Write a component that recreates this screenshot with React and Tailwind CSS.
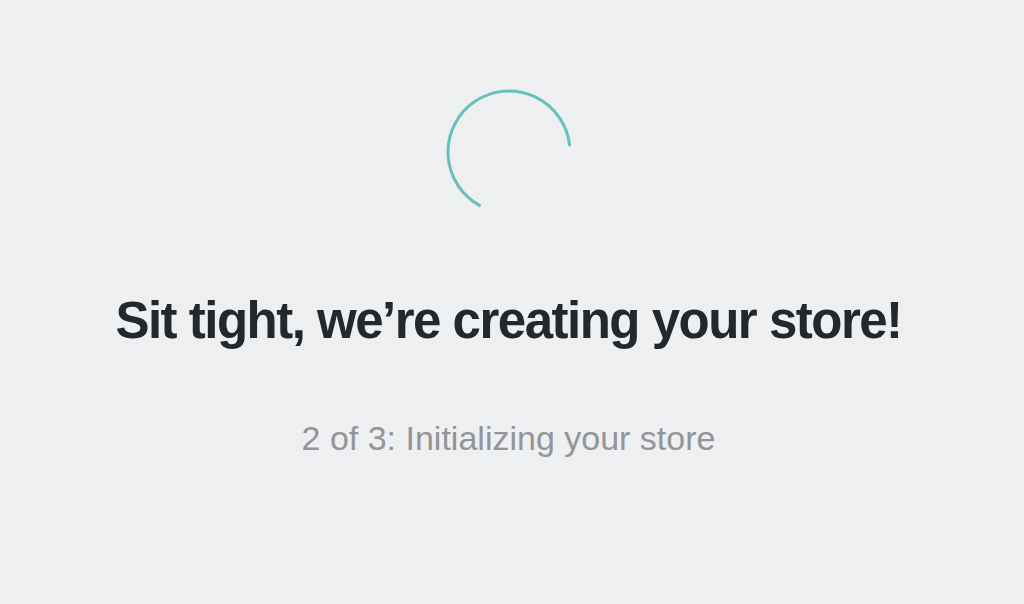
export default function App() {
  return (
    <div className="flex h-[604px] w-full flex-col items-center bg-[#eeeff1] pt-[88px] pr-[7px] font-['Liberation_Sans',Arial,sans-serif]">
      <Spinner />
      <h1 className="mt-[79px] text-[51px] font-bold leading-none tracking-[-1.5px] text-[#23282d]">
        Sit tight, we’re creating your store!
      </h1>
      <p className="mt-[75px] text-[34px] leading-none text-[#939598]">2 of 3: Initializing your store</p>
    </div>
  );
}

function Spinner() {
  return (
    <svg width="128" height="128" viewBox="0 0 128 128" fill="none">
      <path
        d="M34.43 117.35 A61 61 0 1 1 124.6 57.1"
        stroke="#66c0bb"
        strokeWidth="3"
        strokeLinecap="round"
      />
    </svg>
  );
}
